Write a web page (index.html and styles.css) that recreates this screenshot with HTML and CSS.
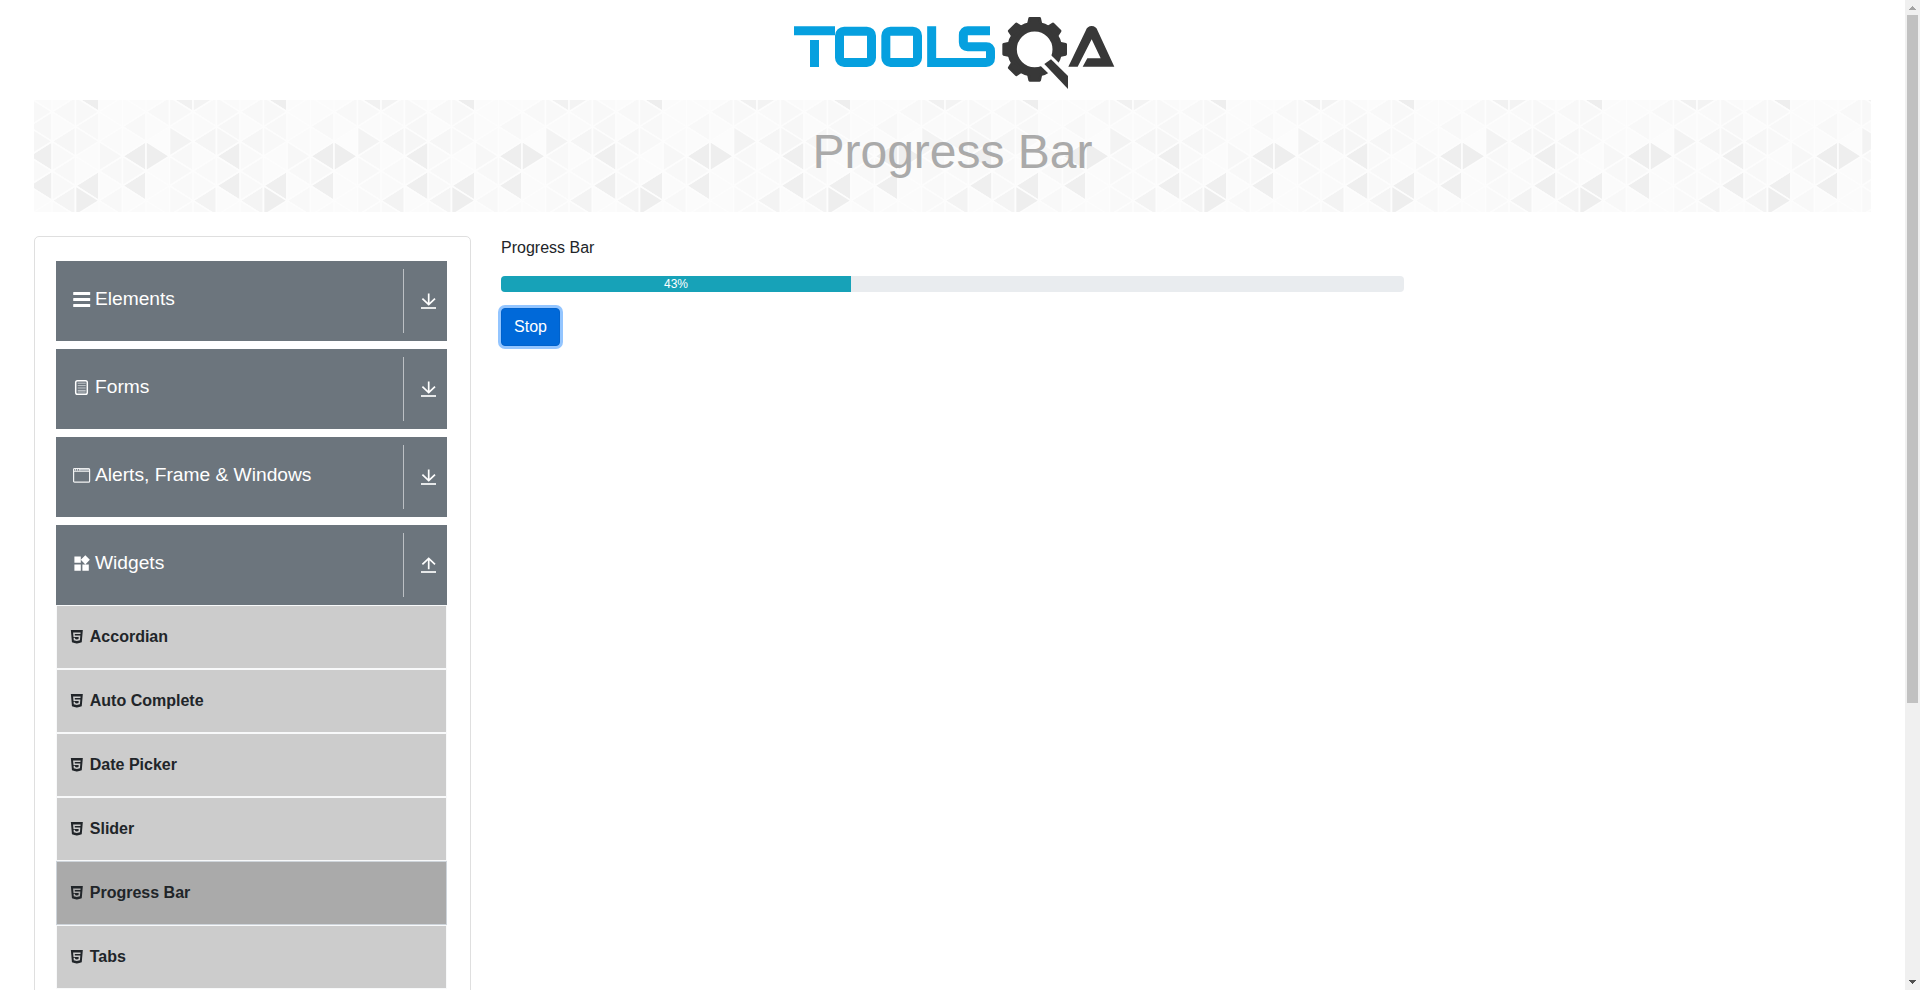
FILE: index.html
```html
<!DOCTYPE html>
<html lang="en">
<head>
<meta charset="utf-8">
<title>Progress Bar</title>
<link rel="stylesheet" href="styles.css">
</head>
<body>
<svg class="defs" width="0" height="0" aria-hidden="true">
  <symbol id="html5" viewBox="0 0 24 24"><path d="M1.5 0h21l-1.91 21.563L11.977 24l-8.564-2.438L1.5 0zm7.031 9.75l-.232-2.718 10.059.003.23-2.622L5.412 4.41l.698 8.01h9.126l-.326 3.426-2.91.804-2.955-.81-.188-2.11H6.248l.33 4.171L12 19.351l5.379-1.443.744-8.157H8.531z"/></symbol>
  <symbol id="down" viewBox="0 0 16 17"><path d="M7.700 .4V11.400M1.400 5.600 7.700 11.600l6.300-6" fill="none" stroke="#fff" stroke-width="1.700"/><path d="M0 14h15v2H0z" fill="#e6e8e9"/></symbol>
  <symbol id="up" viewBox="0 0 16 17"><path d="M7.700 12.200V1.600M1.400 7.400 7.700 1.400l6.300 6" fill="none" stroke="#fff" stroke-width="1.700"/><path d="M0 14h15v2H0z" fill="#e6e8e9"/></symbol>
</svg>
<div class="page">
  <header class="top">
    <svg class="logo" viewBox="39 45 966 225">
      <g fill="none" stroke="#06a0df" stroke-width="27">
        <path d="M42 92.5H165M103.500 120V201"/>
        <rect x="178.500" y="93.500" width="96" height="94" rx="14"/>
        <rect x="317.500" y="93.500" width="95" height="94" rx="14"/>
        <path d="M630 92.5H563Q550 92.500 550 105V127Q550 140 563 140H619Q631.500 140 631.500 153V174Q631.500 187.500 618 187.500H455V79"/>
      </g>
      <g fill="#383838" stroke="#383838" stroke-linejoin="round">
        <circle cx="764" cy="148" r="68" fill="none" stroke-width="29"/>
        <g stroke-width="8">
          <path id="tooth" d="M749 55h30l4 18 6 6h-50l6-6z"/>
          <use href="#tooth" transform="rotate(45 764 148)"/>
          <use href="#tooth" transform="rotate(90 764 148)"/>
          <use href="#tooth" transform="rotate(180 764 148)"/>
          <use href="#tooth" transform="rotate(225 764 148)"/>
          <use href="#tooth" transform="rotate(270 764 148)"/>
          <use href="#tooth" transform="rotate(315 764 148)"/>
        </g>
      </g>
      <path d="M776 192 812 164 838 190 880 240 864 276 803 218z" fill="#fff"/>
      <path d="M793 192 813 178 864 228V267z" fill="#383838"/>
      <path d="M865 200 917 92Q922 78 935 78T953 92L1003 200H908L922 175H962L935 118 893 200z" fill="#383838"/>
    </svg>
  </header>

  <section class="banner">
    <svg class="texture" width="1837" height="112">
      <defs>
        <pattern id="tri" x="18" y="0" width="188" height="112" patternUnits="userSpaceOnUse">
          <rect width="188" height="112" fill="#fbfbfb"/>
          <g id="cells"></g>
        </pattern>
      </defs>
      <rect width="1837" height="112" fill="url(#tri)"/>
    </svg>
    <h1 class="title">Progress Bar</h1>
  </section>

  <main class="columns">
    <aside class="card">
      <div class="group">
        <svg class="icon" viewBox="0 0 19.2 19.2"><g fill="#fff"><rect x="1.200" y="2" width="17" height="3" rx=".6"/><rect x="1.200" y="8" width="17" height="3" rx=".6"/><rect x="1.200" y="14" width="17" height="3" rx=".6"/></g></svg>
        <span class="label">Elements</span><span class="toggle"><svg class="arrow"><use href="#down"/></svg></span>
      </div>
      <div class="group">
        <svg class="icon" viewBox="0 0 19.2 19.2"><rect x="3.700" y="2.700" width="11.600" height="13.600" rx="1.800" fill="none" stroke="#fff" stroke-width="1.500"/><path d="M5.700 5.200h8M5.700 7.600h8M5.700 10h8M5.700 12.400h8M5.700 14h8" stroke="#c5cace" stroke-width="1"/></svg>
        <span class="label">Forms</span><span class="toggle"><svg class="arrow"><use href="#down"/></svg></span>
      </div>
      <div class="group">
        <svg class="icon" viewBox="0 0 19.2 19.2"><rect x="1.600" y="2.500" width="16" height="13.700" rx="1" fill="none" stroke="#f2f3f4" stroke-width="1.200"/><path d="M1.600 5.300h16" stroke="#f2f3f4"/><path d="M8 3.700h9" stroke="#c5cace" stroke-width="1.800"/><path d="M3 3.900h1.200M5 3.900h1.200M7 3.900h1.200" stroke="#fff" stroke-width="1.200"/></svg>
        <span class="label">Alerts, Frame &amp; Windows</span><span class="toggle"><svg class="arrow"><use href="#down"/></svg></span>
      </div>
      <div class="group open">
        <svg class="icon" viewBox="0 0 24 24"><path fill="#fff" d="M13 13v8h8v-8h-8zM3 21h8v-8H3v8zM3 3v8h8V3H3zm13.660-1.310L11 7.340 16.660 13l5.660-5.660-5.660-5.650z"/></svg>
        <span class="label">Widgets</span><span class="toggle"><svg class="arrow"><use href="#up"/></svg></span>
      </div>
      <ul class="menu">
        <li class="item"><svg class="badge"><use href="#html5"/></svg>Accordian</li>
        <li class="item"><svg class="badge"><use href="#html5"/></svg>Auto Complete</li>
        <li class="item"><svg class="badge"><use href="#html5"/></svg>Date Picker</li>
        <li class="item"><svg class="badge"><use href="#html5"/></svg>Slider</li>
        <li class="item active"><svg class="badge"><use href="#html5"/></svg>Progress Bar</li>
        <li class="item"><svg class="badge"><use href="#html5"/></svg>Tabs</li>
      </ul>
    </aside>
    <section class="content">
      <div class="caption">Progress Bar</div>
      <div class="progress"><div class="fill" style="width:350px">43%</div></div>
      <button class="stop">Stop</button>
    </section>
  </main>
</div>
<div class="scrollbar">
  <svg class="cap" viewBox="0 0 15 15"><path d="M4 10h7v-1h-1v-1h-1v-1h-1v-1h-1v1h-1v1h-1v1h-1z" fill="#a3a3a3"/></svg>
  <div class="thumb"></div>
  <svg class="cap end" viewBox="0 0 15 15"><path d="M4 5h7v1h-1v1h-1v1h-1v1h-1v-1h-1v-1h-1v-1h-1z" fill="#505050"/></svg>
</div>
<script src="pattern.js"></script>
</body>
</html>
```

FILE: styles.css
```css
* { box-sizing: border-box; }
body {
  margin: 0;
  height: 990px;
  display: flex;
  overflow: hidden;
  background: #fff;
  color: #212529;
  font: 16px/24px "Liberation Sans", Arial, sans-serif;
}
.defs { position: absolute; }
.page { width: 1905px; height: 990px; overflow: hidden; padding: 0 34px; }
.top { height: 100px; padding: 15px 0 0 759px; }
.logo { display: block; width: 322px; height: 75px; }
.banner { display: grid; height: 112px; width: 1837px; }
.texture, .title { grid-area: 1 / 1; }
.texture { display: block; }
.title {
  margin: 0;
  padding-top: 23px;
  font-size: 48px;
  line-height: 58px;
  font-weight: 400;
  text-align: center;
  color: #aaa;
}
.columns { display: flex; gap: 30px; padding-top: 24px; }
.card {
  width: 437px;
  height: 900px;
  padding: 24px 23px 0 21px;
  border: 1px solid #dfdfdf;
  border-radius: 5px;
}
.group {
  display: flex;
  height: 80px;
  width: 391px;
  margin-bottom: 8px;
  padding: 8px 0 8px 16px;
  background: #6c757d;
  color: #fff;
  font-size: 19.2px;
}
.group.open { margin-bottom: 0; }
.icon { width: 19.2px; height: 19.2px; margin-top: 21px; }
.label { flex: 1; padding: 18px 0 0 3.8px; }
.toggle { width: 44px; border-left: 1px solid #bcc0c4; padding: 24px 0 0 17px; }
.arrow { display: block; width: 16px; height: 17px; }
.menu { list-style: none; margin: 0; padding: 0; width: 391px; }
.item {
  display: flex;
  height: 64px;
  padding: 19px 0 0 13px;
  border: 1px solid #f8f9fa;
  background: #ccc;
  font-weight: 700;
}
.item.active { background: #aaa; border-color: #ced4da; }
.badge { width: 13.7px; height: 13.7px; margin: 5.3px 6.1px 0 0; fill: #212529; }
.content { width: 903px; }
.caption { height: 40px; }
.progress {
  height: 16px;
  display: flex;
  overflow: hidden;
  border-radius: 4px;
  background: #e9ecef;
}
.fill { background: #17a2b8; color: #fff; font-size: 12px; line-height: 16px; text-align: center; }
.stop {
  display: block;
  width: 59px;
  height: 38px;
  margin-top: 16px;
  padding: 0;
  border: 1px solid #0062cc;
  border-radius: 4px;
  background: #0069d9;
  color: #fff;
  font: inherit;
  box-shadow: 0 0 0 3px #93c5ff;
}
.scrollbar { width: 15px; height: 990px; display: flex; flex-direction: column; background: #f0f0f0; }
.cap { display: block; width: 15px; height: 15px; }
.thumb { width: 11px; height: 688px; margin-left: 2px; background: #c1c1c1; }
.end { margin-top: auto; }
```

FILE: pattern.js
```js
// Grey level of each triangle per column: l = tip on the left, r = tip on the right.
const columns = [
  { l: ["f8", "f6", "f8", "f4"], r: ["fb", "fb", "f9", "f9", "fa"] },
  { l: ["ee", "f8", "fb", "ef", "fb"], r: ["f8", "f8", "fb", "ee"] },
  { l: ["fb", "fa", "f8", "f8"], r: ["fb", "fb", "f7", "fb", "fb"] },
  { l: ["fb", "f8", "ee", "ef", "fa"], r: ["fb", "fb", "f8", "fb"] },
  { l: ["f8", "fc", "fb", "fb"], r: ["fb", "fb", "ee", "fb", "fb"] },
  { l: ["f1", "fa", "f8", "f9", "f9"], r: ["f8", "f3", "f8", "f9"] },
  { l: ["f9", "f5", "f9", "f3"], r: ["f3", "fa", "fb", "fa", "f9"] },
  { l: ["fa", "f7", "ef", "ef", "fb"], r: ["f8", "f6", "f9", "fb"] }
];
const W = 23.5, H = 29.6;
let out = "";
columns.forEach((col, i) => {
  const x0 = i * W, x1 = x0 + W;
  const lStart = i % 2 ? -3 : 11.8, rStart = i % 2 ? 11.8 : -3;
  const tri = (tip, base, y, g) => {
    out += `<path d="M${tip} ${y}L${base} ${y - H / 2}V${y + H / 2}z" fill="#${g}${g}${g}" stroke="#fdfdfd" stroke-width="1.7" stroke-linejoin="round"/>`;
  };
  col.l.forEach((g, n) => tri(x0, x1, lStart + n * H, g));
  col.r.forEach((g, n) => tri(x1, x0, rStart + n * H, g));
});
document.getElementById("cells").innerHTML = out;
```
